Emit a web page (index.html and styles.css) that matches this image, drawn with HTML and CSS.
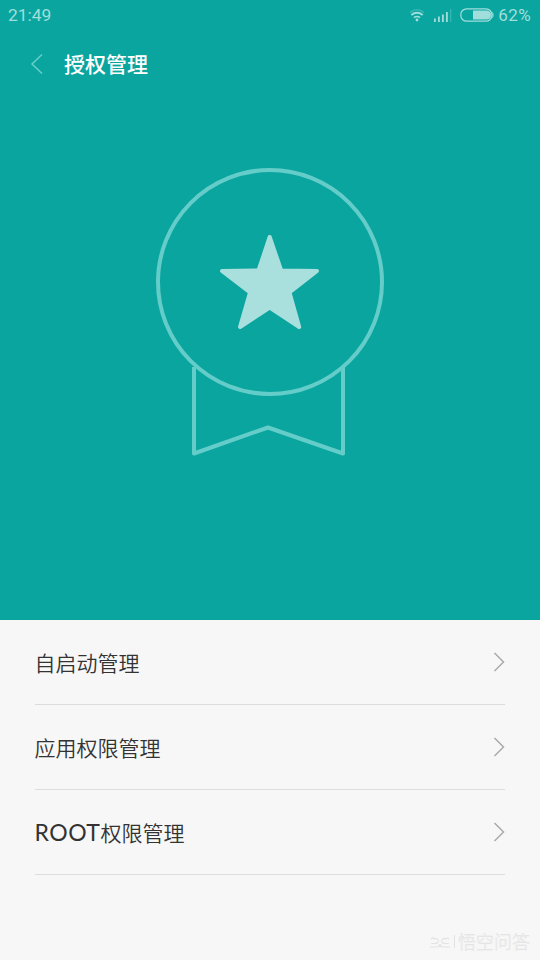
FILE: index.html
```html
<!DOCTYPE html>
<html lang="zh-CN">
<head>
<meta charset="utf-8">
<title>授权管理</title>
<link rel="stylesheet" href="styles.css">
</head>
<body>
<main class="screen">
  <section class="hero">
    <div class="status">
      <span class="time">21:49</span>
      <div class="indicators">
        <svg class="wifi" width="16" height="14" viewBox="0 0 16 14" fill="none" stroke="currentColor" stroke-width="1.7">
          <path d="M1 4.500Q8-1 15 4.500" opacity=".3"/><path d="M2.300 7Q8 2.500 13.700 7"/><path d="M4.900 9.700Q8 7.300 11.100 9.700"/><circle cx="8" cy="12" r="1.400" fill="currentColor" stroke="none"/>
        </svg>
        <svg class="signal" width="19" height="14" viewBox="0 0 19 14" fill="currentColor">
          <path d="M1 10.500h1.800V14H1zM5 8.500h1.800V14H5zM9 6.500h1.800V14H9zM13 4h1.800v10H13z"/><path d="M17 1h1.300v13H17z" opacity=".3"/>
        </svg>
        <svg class="battery" width="35" height="14" viewBox="0 0 35 14">
          <rect x=".8" y=".8" width="31" height="12.400" rx="5.800" fill="none" stroke="currentColor" stroke-width="1.200"/>
          <path d="M13 2.500H27Q31 3 31 7T27 11.500H13z" fill="currentColor"/>
          <path d="M32.300 3.500Q35 7 32.300 10.500z" fill="currentColor"/>
        </svg>
        <span class="percent">62%</span>
      </div>
    </div>
    <header class="bar">
      <svg class="back" width="14" height="22" viewBox="0 0 14 22"><path d="M12 1.500 2 11l10 9.500"/></svg>
      <h1 class="title">授权管理</h1>
    </header>
    <svg class="medal" width="240" height="300" viewBox="150 160 240 300">
      <g class="outline">
        <circle cx="270" cy="282" r="112"/>
        <path d="M194 367v86.500l74-26 75 26V367"/>
      </g>
      <path class="star" d="M269.700 237 281.200 270.500 317 271 289.500 292.500 299.200 327 269.700 307.500 240 327 250 292.500 222 271 258.500 270.500z"/>
    </svg>
  </section>
  <nav class="list">
    <a class="row"><span>自启动管理</span><svg class="chevron" width="12" height="20" viewBox="0 0 12 20"><path d="m1.500 1 9 9-9 9"/></svg></a>
    <a class="row"><span>应用权限管理</span><svg class="chevron" width="12" height="20" viewBox="0 0 12 20"><path d="m1.500 1 9 9-9 9"/></svg></a>
    <a class="row"><span><span class="latin">ROOT</span>权限管理</span><svg class="chevron" width="12" height="20" viewBox="0 0 12 20"><path d="m1.500 1 9 9-9 9"/></svg></a>
  </nav>
  <footer class="watermark">
    <svg width="22" height="16" viewBox="0 0 22 16"><path d="M1 14h7q3 0 3-3 0 3 3 3h7M2 10.500h5q3-1 2-3.500-1-2-3-1-2-2-4 0M20 10.500h-5q-3-1-2-3.500 1-2 3-1 2-2 4 0"/></svg>
    <span class="divider"></span>
    <span class="brand">悟空问答</span>
  </footer>
</main>
</body>
</html>
```

FILE: styles.css
```css
* { box-sizing: border-box; }
body { margin: 0; font-family: "Noto Sans CJK SC", sans-serif; }
.screen { width: 540px; height: 960px; background: #f7f7f7; display: flex; flex-direction: column; overflow: hidden; }
.hero { height: 620px; flex: none; background: #0ba5a0; display: flex; flex-direction: column; }
.status { height: 30px; padding: 0 9px 0 8px; display: flex; align-items: center; justify-content: space-between; color: #9fdedb; font-family: Roboto, sans-serif; }
.time { font-size: 17.400px; }
.indicators { display: flex; align-items: center; }
.signal { margin-left: 8px; }
.battery { margin-left: 8px; }
.percent { margin-left: 3px; font-size: 17px; letter-spacing: .4px; }
.bar { height: 68px; padding-left: 30px; display: flex; align-items: center; }
.back { fill: none; stroke: #68cfcb; stroke-width: 1.500; }
.title { margin: -2px 0 0 20px; color: #fff; font-size: 21px; font-weight: 500; line-height: 30px; }
.medal { margin: 62px 0 0 150px; }
.outline { fill: none; stroke: #65cdc9; stroke-width: 4; stroke-linejoin: round; }
.star { fill: #a9e0dd; stroke: #a9e0dd; stroke-width: 4; stroke-linejoin: round; }
.list { padding: 0 35px; }
.row { height: 85px; padding-bottom: 1px; display: flex; align-items: center; justify-content: space-between; border-bottom: 1px solid #dcdcdc; color: #333; font-size: 21px; font-weight: 350; line-height: 30px; }
.row > span { margin-left: -.5px; }
.latin { font-family: Lato, sans-serif; font-size: 23px; font-weight: 400; line-height: 1; letter-spacing: .5px; }
.chevron { fill: none; stroke: #aaa; stroke-width: 1.500; }
.watermark { margin-top: auto; height: 38px; padding-right: 10px; display: flex; align-items: center; justify-content: flex-end; gap: 3px; }
.watermark svg { fill: none; stroke: #e3e3e3; stroke-width: 1.200; }
.divider { width: 1px; height: 13px; background: #e2e2e2; }
.brand { color: #fbfbfb; font-size: 18px; font-weight: 300; line-height: 24px; -webkit-text-stroke: .5px #e2e2e2; }
```
